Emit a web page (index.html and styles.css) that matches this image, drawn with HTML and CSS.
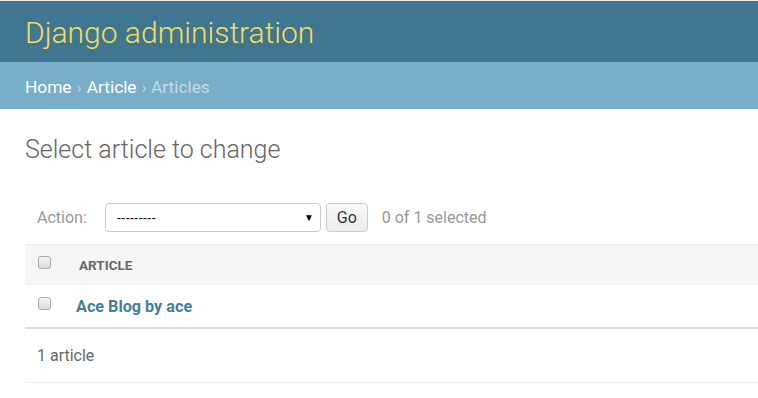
FILE: index.html
```html
<!DOCTYPE html>
<html lang="en">
<head>
    <meta charset="UTF-8">
    <title>Select article to change | Django site admin</title>
    <link rel="stylesheet" href="styles.css">
</head>
<body>
    <div class="header">
        <h1 class="branding">Django administration</h1>
    </div>
    <div class="breadcrumbs">
        <a href="#">Home</a> &rsaquo; <a href="#">Article</a> &rsaquo; Articles
    </div>

    <div class="content">
        <h1 class="title">Select article to change</h1>

        <div class="changelist">
            <div class="actions">
                <label>Action:</label>
                <div class="select">
                    <span>---------</span>
                    <span class="arrow">&#9660;</span>
                </div>
                <button class="go" type="button">Go</button>
                <span class="counter">0 of 1 selected</span>
            </div>

            <table class="result-list">
                <thead>
                    <tr>
                        <th class="check"><span class="checkbox"></span></th>
                        <th>Article</th>
                    </tr>
                </thead>
                <tbody>
                    <tr>
                        <td class="check"><span class="checkbox"></span></td>
                        <td><a href="#">Ace Blog by ace</a></td>
                    </tr>
                </tbody>
            </table>

            <p class="paginator">1 article</p>
        </div>
    </div>
</body>
</html>
```

FILE: styles.css
```css
body {
    margin: 0;
    font-family: Roboto, "Liberation Sans", sans-serif;
    color: #333;
    background: #fff;
    border-top: 1px solid #e8e8e8;
}
a {
    text-decoration: none;
}
.header {
    background: #417690;
    height: 61px;
    padding: 0 25px;
    display: flex;
    align-items: center;
}
.branding {
    margin: 2px 0 0;
    font-size: 30px;
    font-weight: 300;
    color: #f5dd5d;
}
.breadcrumbs {
    background: #79aec8;
    height: 47px;
    padding: 2px 25px 0;
    box-sizing: border-box;
    display: flex;
    align-items: center;
    gap: 5px;
    font-size: 17.3px;
    color: #c4dce8;
}
.breadcrumbs a {
    color: #fff;
}
.content {
    padding: 26px 0 0 25px;
}
.title {
    margin: 0;
    font-size: 25px;
    font-weight: 300;
    color: #666;
}
.changelist {
    margin-top: 38px;
}
.actions {
    display: flex;
    align-items: center;
    height: 30px;
    padding-left: 12px;
    margin-bottom: 12px;
    font-size: 16px;
    color: #999;
}
.actions label {
    margin-right: 18px;
}
.select {
    width: 216px;
    height: 29px;
    box-sizing: border-box;
    border: 1px solid #ccc;
    border-radius: 4px;
    display: flex;
    align-items: center;
    justify-content: space-between;
    padding: 0 6px 0 11px;
    font-size: 13px;
    color: #000;
    font-family: "Liberation Sans", Arial, sans-serif;
}
.select .arrow {
    font-size: 10px;
}
.go {
    margin-left: 5px;
    width: 42px;
    height: 29px;
    border: 1px solid #ccc;
    border-radius: 4px;
    background: linear-gradient(#fafafa, #ececec);
    font-family: Roboto, sans-serif;
    font-size: 16px;
    color: #333;
    padding: 0;
}
.counter {
    margin-left: 14px;
}
.result-list {
    width: 100%;
    border-collapse: collapse;
}
.result-list th {
    background: #f6f6f6;
    border-top: 1px solid #eee;
    border-bottom: 1px solid #eee;
    height: 39px;
    text-align: left;
    font-size: 13.5px;
    font-weight: 700;
    text-transform: uppercase;
    color: #666;
    padding: 0;
}
.result-list td {
    height: 42px;
    border-bottom: 2px solid #ddd;
    padding: 0;
    font-size: 16.2px;
}
.result-list td a {
    color: #447e9b;
    font-weight: 700;
}
.result-list .check {
    width: 38px;
    padding-left: 13px;
    box-sizing: content-box;
}
.result-list th:nth-child(2) {
    padding-left: 3px;
}
.checkbox {
    display: block;
    width: 11px;
    height: 11px;
    border: 1px solid #aaa;
    border-radius: 3px;
    background: linear-gradient(#f4f4f4, #dcdcdc);
    margin-top: -5px;
}
.paginator {
    margin: 0;
    height: 53px;
    line-height: 53px;
    padding-left: 12px;
    border-bottom: 1px solid #eee;
    font-size: 16px;
    color: #666;
}
```
